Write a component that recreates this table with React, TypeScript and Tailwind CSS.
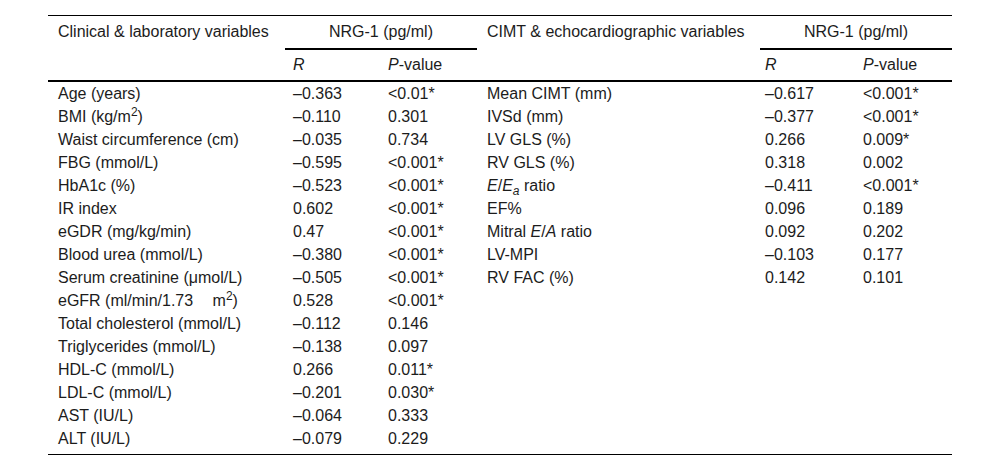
import React from "react";

type Row = { label: React.ReactNode; r: string; p: string };

const clinical: Row[] = [
  { label: "Age (years)", r: "–0.363", p: "<0.01*" },
  { label: <>BMI (kg/m<sup>2</sup>)</>, r: "–0.110", p: "0.301" },
  { label: "Waist circumference (cm)", r: "–0.035", p: "0.734" },
  { label: "FBG (mmol/L)", r: "–0.595", p: "<0.001*" },
  { label: "HbA1c (%)", r: "–0.523", p: "<0.001*" },
  { label: "IR index", r: "0.602", p: "<0.001*" },
  { label: "eGDR (mg/kg/min)", r: "0.47", p: "<0.001*" },
  { label: "Blood urea (mmol/L)", r: "–0.380", p: "<0.001*" },
  { label: "Serum creatinine (μmol/L)", r: "–0.505", p: "<0.001*" },
  { label: <>eGFR (ml/min/1.73<span className="inline-block w-[15px]" /> m<sup>2</sup>)</>, r: "0.528", p: "<0.001*" },
  { label: "Total cholesterol (mmol/L)", r: "–0.112", p: "0.146" },
  { label: "Triglycerides (mmol/L)", r: "–0.138", p: "0.097" },
  { label: "HDL-C (mmol/L)", r: "0.266", p: "0.011*" },
  { label: "LDL-C (mmol/L)", r: "–0.201", p: "0.030*" },
  { label: "AST (IU/L)", r: "–0.064", p: "0.333" },
  { label: "ALT (IU/L)", r: "–0.079", p: "0.229" },
];

const echo: Row[] = [
  { label: "Mean CIMT (mm)", r: "–0.617", p: "<0.001*" },
  { label: "IVSd (mm)", r: "–0.377", p: "<0.001*" },
  { label: "LV GLS (%)", r: "0.266", p: "0.009*" },
  { label: "RV GLS (%)", r: "0.318", p: "0.002" },
  {
    label: (
      <>
        <i>E</i>/<i>E</i>
        <sub className="italic relative top-[4px]">a</sub> ratio
      </>
    ),
    r: "–0.411",
    p: "<0.001*",
  },
  { label: "EF%", r: "0.096", p: "0.189" },
  { label: <>Mitral <i>E</i>/<i>A</i> ratio</>, r: "0.092", p: "0.202" },
  { label: "LV-MPI", r: "–0.103", p: "0.177" },
  { label: "RV FAC (%)", r: "0.142", p: "0.101" },
];

const cols = "grid grid-cols-[237px_100px_92px_283px_98px_94px]";

export default function App() {
  return (
    <div
      className="w-[1000px] h-[471px] bg-white pt-[15px] pl-[48px] text-[16px] leading-[20px] text-[#1c1c1c]"
      style={{ fontFamily: '"Liberation Sans", Arial, sans-serif' }}
    >
      <div className="w-[904px] border-t border-black">
        {/* header row 1 */}
        <div className={`${cols} h-[34px]`}>
          <div className="pl-[10px] pb-[2px] flex items-center whitespace-nowrap">Clinical &amp; laboratory variables</div>
          <div className="col-span-2 border-b-2 border-black flex items-center justify-center">NRG-1 (pg/ml)</div>
          <div className="pl-[10px] pb-[2px] flex items-center whitespace-nowrap">CIMT &amp; echocardiographic variables</div>
          <div className="col-span-2 border-b-2 border-black flex items-center justify-center">NRG-1 (pg/ml)</div>
        </div>
        {/* header row 2 */}
        <div className={`${cols} h-[32px] border-b-2 border-black items-center pb-[1px]`}>
          <div />
          <div className="pl-[8px] italic">R</div>
          <div className="pl-[3px]">
            <i>P</i>-value
          </div>
          <div />
          <div className="pl-[5px] italic">R</div>
          <div className="pl-[5px]">
            <i>P</i>-value
          </div>
        </div>
        {/* body */}
        <div className="border-b border-black pb-[4px]">
          {clinical.map((c, i) => {
            const e = echo[i];
            return (
              <div key={i} className={`${cols} h-[23px] items-center`}>
                <div className="pl-[10px] whitespace-nowrap">{c.label}</div>
                <div className="pl-[8px]">{c.r}</div>
                <div className="pl-[3px]">{c.p}</div>
                <div className="pl-[10px] whitespace-nowrap">{e ? e.label : ""}</div>
                <div className="pl-[5px]">{e ? e.r : ""}</div>
                <div className="pl-[5px]">{e ? e.p : ""}</div>
              </div>
            );
          })}
        </div>
      </div>
    </div>
  );
}
